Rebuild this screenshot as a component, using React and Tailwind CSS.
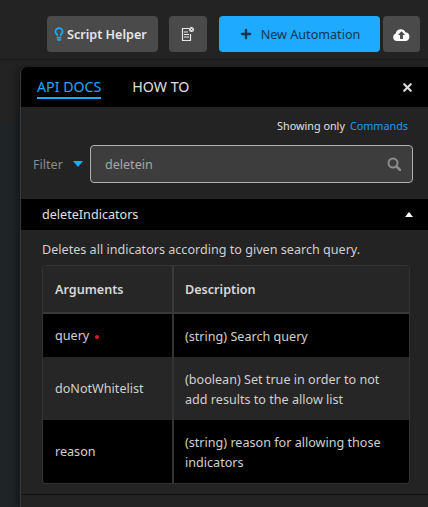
import { Plus, X, Lightbulb } from 'lucide-react';

const rows = [
  { name: 'query', required: true, desc: '(string) Search query', cls: 'h-[43px] bg-black' },
  { name: 'doNotWhitelist', desc: '(boolean) Set true in order to not add results to the allow list', cls: 'h-[63px] bg-[#262626]' },
  { name: 'reason', desc: '(string) reason for allowing those indicators', cls: 'h-[63px] bg-black' },
];

function ScriptIcon() {
  return (
    <svg width="14" height="16" viewBox="0 0 14 16" fill="none" stroke="#e6e6e6" strokeWidth="1.2">
      <path d="M8 2.5H1.5v12h8V8" />
      <path d="M3 6h4M3 8.5h5M3 11h5" />
      <circle cx="10.5" cy="3.5" r="2.5" fill="#e6e6e6" stroke="none" />
      <path d="M9.6 2.6l1.8 1.8M11.4 2.6l-1.8 1.8" stroke="#4a4a4a" strokeWidth="0.8" />
    </svg>
  );
}

function UploadIcon() {
  return (
    <svg width="17" height="13" viewBox="0 0 17 13">
      <path fill="#ffffff" d="M4 13a3.8 3.8 0 0 1-1.2-7.4A5.2 5.2 0 0 1 12.6 4.2 4.5 4.5 0 0 1 13 13z" />
      <path fill="#4a4a4a" d="M8.5 3.2 12 7H9.9v4H7.1V7H5z" />
    </svg>
  );
}

function SearchIcon() {
  return (
    <svg width="14" height="14" viewBox="0 0 14 14" fill="none" stroke="#8c8c8c" strokeWidth="2">
      <circle cx="6" cy="6" r="4.5" />
      <path d="M9.4 9.4 13 13" strokeWidth="2.6" strokeLinecap="round" />
    </svg>
  );
}

function App() {
  return (
    <div className="h-[507px] w-[428px] overflow-hidden bg-[#232323] text-[12.6px] text-[#e0e0e0] font-['Noto_Sans',sans-serif]">
      {/* Top bar */}
      <div className="flex h-[60px] items-center border-b border-[#1a1a1a] pl-[47px] pt-[9px]">
        <button className="flex h-9 w-[111px] items-center gap-[1px] rounded bg-[#4a4a4a] pl-[5px] font-semibold text-[#e6e6e6]">
          <Lightbulb size={14} strokeWidth={3} className="text-[#1eaaff]" />
          <span className="pt-[2px]">Script Helper</span>
        </button>
        <button className="ml-[11px] flex h-9 w-[38px] items-center justify-center rounded bg-[#4a4a4a]">
          <ScriptIcon />
        </button>
        <button className="ml-3 flex h-9 w-[161px] items-center justify-center gap-2 rounded bg-[#1eaaff] text-[#17364d]">
          <Plus size={14} strokeWidth={4} />
          <span className="pt-[2px]">New Automation</span>
        </button>
        <button className="ml-[3px] flex h-9 w-[37px] items-center justify-center rounded bg-[#4a4a4a]">
          <UploadIcon />
        </button>
      </div>

      <div className="flex">
        {/* Page behind the drawer */}
        <div className="w-5 shrink-0">
          <div className="h-[62px] bg-[#232323]" />
          <div className="h-[385px] bg-[#1f2426]" />
        </div>

        {/* Drawer */}
        <div className="mt-[7px] min-w-0 flex-1 rounded-tl-md border-l border-[#3a3a3a] bg-[#232323] shadow-[-4px_0_6px_rgba(0,0,0,0.3)]">
          <div className="flex h-10 items-start rounded-tl-md bg-black pl-4 pr-[14px] text-[14.2px]">
            <div className="border-b-2 border-[#1eaaff] pt-[10px] leading-5 text-[#1eaaff]">API DOCS</div>
            <div className="ml-[31px] pt-[10px] leading-5 text-[#e0e0e0]">HOW TO</div>
            <X size={13} strokeWidth={4} className="ml-auto self-center text-[#dddddd]" />
          </div>

          <div className="flex h-[38px] items-center justify-end gap-[5px] pr-5 pt-[1px] text-[10.8px]">
            <span className="text-[#e0e0e0]">Showing only</span>
            <span className="text-[#1e9be6]">Commands</span>
          </div>

          <div className="flex items-center pl-3 pr-[15px]">
            <span className="pt-[2px] text-[#8c8c8c]">Filter</span>
            <span className="ml-[10px] h-0 w-0 border-x-[5px] border-t-[6px] border-x-transparent border-t-[#1eaaff]" />
            <div className="ml-[7px] flex h-[38px] flex-1 items-center rounded border border-[#b0b0b0] bg-[#3d3d3d] pl-[14px] pr-[11px]">
              <span className="pt-[3px] text-[#a8a8a8]">deletein</span>
              <div className="ml-auto"><SearchIcon /></div>
            </div>
          </div>

          <div className="mt-4 flex h-[31px] items-center justify-between bg-black pl-[21px] pr-[15px]">
            <span className="pt-[2px]">deleteIndicators</span>
            <span className="h-0 w-0 border-x-[4px] border-b-[5px] border-x-transparent border-b-white" />
          </div>

          <p className="ml-[21px] mt-[11px] leading-[18px] text-[#d0d0d0]">Deletes all indicators according to given search query.</p>

          <div className="ml-[21px] mt-[6px] w-[368px] overflow-hidden rounded border border-[#333333]">
            <div className="flex h-[48px] items-center border-b-2 border-[#3a3a3a] bg-[#262626] font-semibold text-[#d8d8d8]">
              <div className="flex h-full w-[131px] items-center border-r-2 border-[#3a3a3a] pl-3 pt-[2px]">Arguments</div>
              <div className="pl-[11px] pt-[2px]">Description</div>
            </div>
            {rows.map((row) => (
              <div key={row.name} className={`flex items-center ${row.cls}`}>
                <div className="flex h-full w-[131px] shrink-0 items-center gap-[6px] border-r-2 border-[#333333] pl-3 pt-[2px] text-[#d0d0d0]">
                  {row.name}
                  {row.required && <span className="h-1 w-1 rounded-full bg-[#e01b24]" />}
                </div>
                <div className="pl-[11px] pr-5 pt-[2px] leading-5 text-[#d0d0d0]">{row.desc}</div>
              </div>
            ))}
          </div>

          <div className="mt-[10px] border-t border-[#111111]" />
        </div>
      </div>
    </div>
  );
}

export default App;
